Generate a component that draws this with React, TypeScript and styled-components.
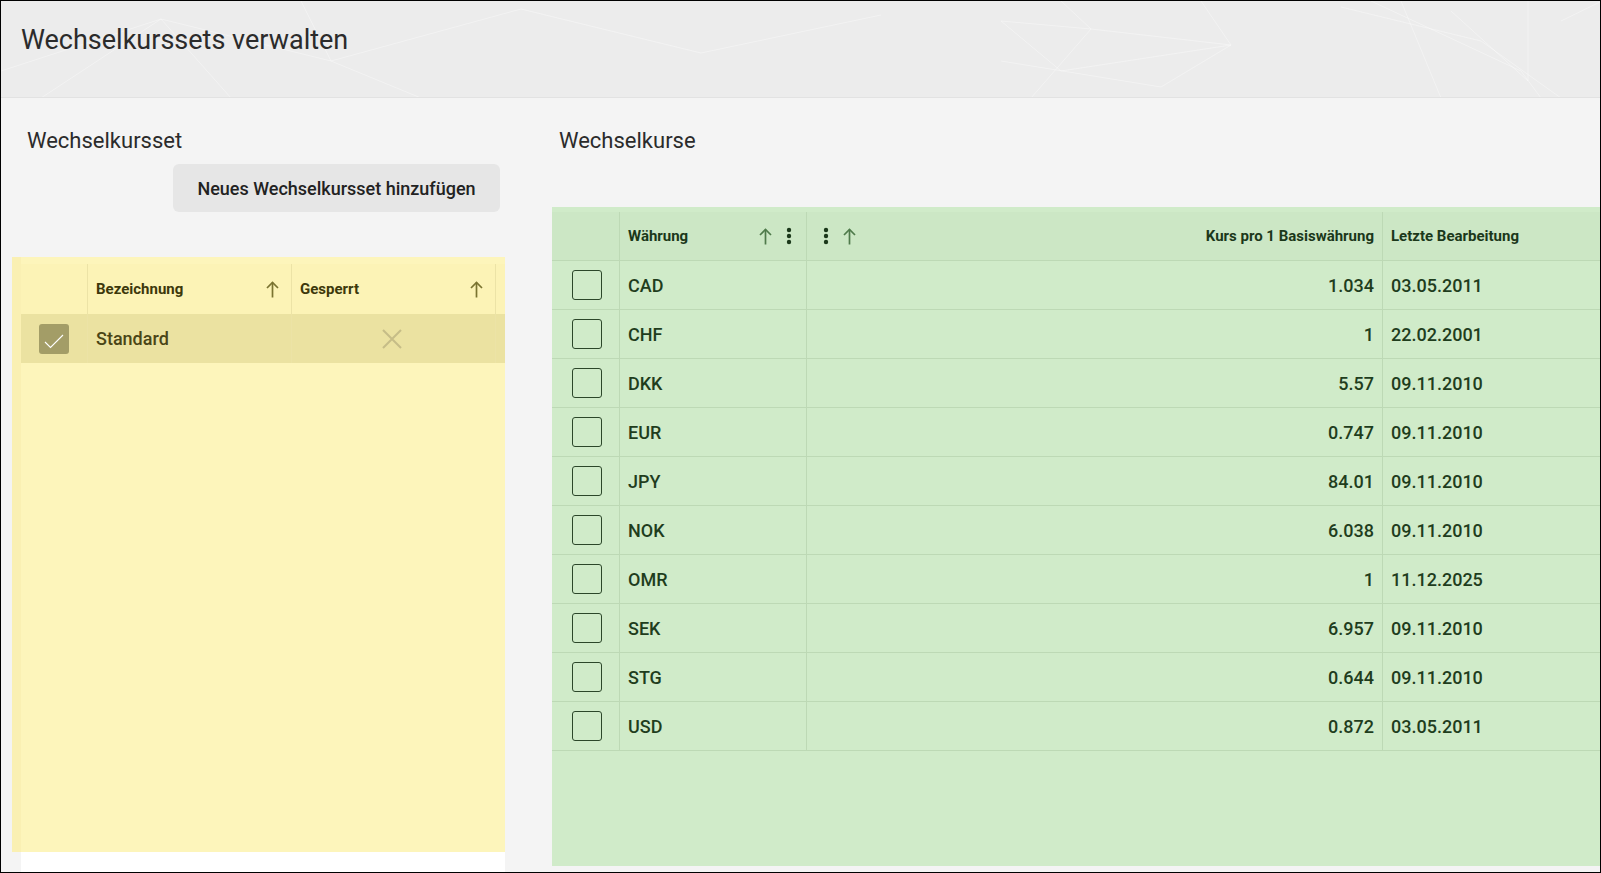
import styled, { createGlobalStyle } from "styled-components"

const GlobalStyle = createGlobalStyle`
  html, body {
    margin: 0;
    padding: 0;
    background: #f4f4f4;
  }
  body {
    font-family: Roboto, "Liberation Sans", Arial, sans-serif;
  }
  * {
    box-sizing: border-box;
  }
`

const pattern = encodeURIComponent(
  `<svg xmlns="http://www.w3.org/2000/svg" width="1601" height="97" viewBox="0 0 1601 97">
    <g fill="none" stroke="#ffffff" stroke-opacity="0.35" stroke-width="1">
      <path d="M0 70 L160 18 L330 60 L520 8 L700 52 L880 14"/>
      <path d="M40 97 L160 18 L230 97"/>
      <path d="M330 60 L420 97 M330 60 L300 0"/>
      <path d="M1000 20 L1090 28 L1230 44 L1200 0 M1030 97 L1090 28 L1060 0"/>
      <path d="M1000 60 L1160 86 L1230 44 L1060 70 L1000 20"/>
      <path d="M1340 6 L1480 40 L1560 97 M1370 0 L1520 70 L1540 97"/>
      <path d="M1400 0 L1440 97 M1450 10 L1527 80 L1527 0 M1560 20 L1601 0"/>
    </g>
  </svg>`
)

const Page = styled.div`
  width: 1601px;
  height: 873px;
  border: 1px solid #000;
  display: flex;
  flex-direction: column;
  background: #f4f4f4;
  overflow: hidden;
`

const Header = styled.header`
  flex: none;
  height: 97px;
  padding: 20px 0 0 20px;
  background-color: #ececec;
  background-image: url("data:image/svg+xml,${pattern}");
  border-bottom: 1px solid #e2e2e2;
`

const Title = styled.h1`
  margin: 0;
  font-size: 27px;
  line-height: 38px;
  font-weight: 400;
  color: #2b2b2b;
`

const Body = styled.main`
  flex: 1;
  display: flex;
  padding-left: 11px;
  min-height: 0;
`

const LeftCol = styled.section`
  width: 493px;
  flex: none;
  display: flex;
  flex-direction: column;
`

const RightCol = styled.section`
  flex: 1;
  margin-left: 47px;
  display: flex;
  flex-direction: column;
`

const SectionTitle = styled.h2<{ $indent: number }>`
  margin: 29px 0 0 ${(p) => p.$indent}px;
  font-size: 22px;
  line-height: 28px;
  font-weight: 400;
  color: #2b2b2b;
`

const ButtonRow = styled.div`
  display: flex;
  justify-content: flex-end;
  padding-right: 5px;
  margin-top: 9px;
`

const AddButton = styled.button`
  width: 327px;
  height: 48px;
  border: none;
  border-radius: 6px;
  background: #e6e6e6;
  font-family: inherit;
  font-size: 18px;
  font-weight: 500;
  color: #222;
  cursor: pointer;
`

const YellowPanel = styled.div`
  margin-top: 45px;
  height: 595px;
  flex: none;
  border-left: 9px solid #faf0b3;
  background: #fdf5bb;
  padding-top: 7px;
`

const WhiteFoot = styled.div`
  flex: 1;
  margin-left: 9px;
  background: #fff;
`

const SetRow = styled.div<{ $head?: boolean; $selected?: boolean }>`
  display: grid;
  grid-template-columns: 67px 204px 204px 1fr;
  height: ${(p) => (p.$head ? 50 : 49)}px;
  background: ${(p) => (p.$selected ? "#ebe2a1" : p.$head ? "#fcf3b6" : "transparent")};
`

const SetCell = styled.div<{ $center?: boolean; $last?: boolean }>`
  display: flex;
  align-items: center;
  justify-content: ${(p) => (p.$center ? "center" : "flex-start")};
  padding: 0 12px 0 8px;
  border-right: ${(p) => (p.$last ? "none" : "1px solid #ece3a6")};
  min-width: 0;
`

const HeadLabel = styled.span<{ $color: string }>`
  flex: 1;
  font-size: 15px;
  font-weight: 700;
  color: ${(p) => p.$color};
  white-space: nowrap;
`

const SetText = styled.span`
  font-size: 18px;
  font-weight: 500;
  color: #4a4516;
`

const CheckedBox = styled.span`
  width: 30px;
  height: 30px;
  margin-left: 4px;
  border-radius: 3px;
  background: #a39d67;
  display: flex;
  align-items: center;
  justify-content: center;
`

const GreenPanel = styled.div`
  flex: 1;
  margin-top: 52px;
  margin-bottom: 6px;
  background: #d0ebc9;
  padding-top: 5px;
`

const RateRow = styled.div<{ $head?: boolean }>`
  display: grid;
  grid-template-columns: 68px 187px 576px 1fr;
  height: 49px;
  border-bottom: 1px solid #bdd9b5;
  background: ${(p) => (p.$head ? "#cce7c5" : "transparent")};
`

const RateCell = styled.div<{ $align?: "left" | "right" | "center"; $last?: boolean; $pad?: string }>`
  display: flex;
  align-items: center;
  justify-content: ${(p) =>
    p.$align === "right" ? "flex-end" : p.$align === "center" ? "center" : "flex-start"};
  gap: 10px;
  padding: ${(p) => p.$pad ?? "0 8px"};
  border-right: ${(p) => (p.$last ? "none" : "1px solid #bdd9b5")};
  min-width: 0;
`

const RateText = styled.span`
  font-size: 18px;
  font-weight: 500;
  color: #1f3d1d;
`

const IconGroup = styled.span<{ $color: string }>`
  display: flex;
  align-items: center;
  gap: 14px;
  color: ${(p) => p.$color};
`

const EmptyBox = styled.span`
  width: 30px;
  height: 30px;
  margin-left: 3px;
  border: 1px solid #2c472a;
  border-radius: 3px;
`

const ArrowUp = () => (
  <svg width="13" height="17" viewBox="0 0 13 17" fill="none" stroke="currentColor" strokeWidth="1.7">
    <path d="M6.5 16.5V1.5" />
    <path d="M1 7L6.5 1.5L12 7" />
  </svg>
)

const Dots = ({ color }: { color: string }) => (
  <svg width="6" height="18" viewBox="0 0 6 18" fill={color}>
    <circle cx="3" cy="3" r="2.2" />
    <circle cx="3" cy="9" r="2.2" />
    <circle cx="3" cy="15" r="2.2" />
  </svg>
)

const XMark = () => (
  <svg width="22" height="22" viewBox="0 0 22 22" fill="none" stroke="#c6bd87" strokeWidth="2">
    <path d="M2 2L20 20M20 2L2 20" />
  </svg>
)

const Check = () => (
  <svg width="30" height="30" viewBox="0 0 30 30" fill="none" stroke="#fff" strokeWidth="1.1">
    <path d="M6 18L11.5 23.5L24 11" />
  </svg>
)

const rates = [
  { code: "CAD", rate: "1.034", date: "03.05.2011" },
  { code: "CHF", rate: "1", date: "22.02.2001" },
  { code: "DKK", rate: "5.57", date: "09.11.2010" },
  { code: "EUR", rate: "0.747", date: "09.11.2010" },
  { code: "JPY", rate: "84.01", date: "09.11.2010" },
  { code: "NOK", rate: "6.038", date: "09.11.2010" },
  { code: "OMR", rate: "1", date: "11.12.2025" },
  { code: "SEK", rate: "6.957", date: "09.11.2010" },
  { code: "STG", rate: "0.644", date: "09.11.2010" },
  { code: "USD", rate: "0.872", date: "03.05.2011" },
]

export default function App() {
  return (
    <>
      <GlobalStyle />
      <Page>
        <Header>
          <Title>Wechselkurssets verwalten</Title>
        </Header>
        <Body>
          <LeftCol>
            <SectionTitle $indent={15}>Wechselkursset</SectionTitle>
            <ButtonRow>
              <AddButton>Neues Wechselkursset hinzufügen</AddButton>
            </ButtonRow>
            <YellowPanel>
              <SetRow $head>
                <SetCell />
                <SetCell>
                  <HeadLabel $color="#3d380b">Bezeichnung</HeadLabel>
                  <IconGroup $color="#7a7330">
                    <ArrowUp />
                  </IconGroup>
                </SetCell>
                <SetCell>
                  <HeadLabel $color="#3d380b">Gesperrt</HeadLabel>
                  <IconGroup $color="#7a7330">
                    <ArrowUp />
                  </IconGroup>
                </SetCell>
                <SetCell $last />
              </SetRow>
              <SetRow $selected>
                <SetCell $center>
                  <CheckedBox>
                    <Check />
                  </CheckedBox>
                </SetCell>
                <SetCell>
                  <SetText>Standard</SetText>
                </SetCell>
                <SetCell $center>
                  <XMark />
                </SetCell>
                <SetCell $last />
              </SetRow>
            </YellowPanel>
            <WhiteFoot />
          </LeftCol>
          <RightCol>
            <SectionTitle $indent={7}>Wechselkurse</SectionTitle>
            <GreenPanel>
              <RateRow $head>
                <RateCell />
                <RateCell $pad="0 14px 0 8px">
                  <HeadLabel $color="#1b381a">Währung</HeadLabel>
                  <IconGroup $color="#4f7a4b">
                    <ArrowUp />
                    <Dots color="#1b381a" />
                  </IconGroup>
                </RateCell>
                <RateCell $pad="0 8px 0 16px">
                  <IconGroup $color="#4f7a4b">
                    <Dots color="#1b381a" />
                    <ArrowUp />
                  </IconGroup>
                  <HeadLabel $color="#1b381a" style={{ textAlign: "right" }}>
                    Kurs pro 1 Basiswährung
                  </HeadLabel>
                </RateCell>
                <RateCell $last>
                  <HeadLabel $color="#1b381a">Letzte Bearbeitung</HeadLabel>
                </RateCell>
              </RateRow>
              {rates.map((r) => (
                <RateRow key={r.code}>
                  <RateCell $align="center">
                    <EmptyBox />
                  </RateCell>
                  <RateCell>
                    <RateText>{r.code}</RateText>
                  </RateCell>
                  <RateCell $align="right">
                    <RateText>{r.rate}</RateText>
                  </RateCell>
                  <RateCell $last>
                    <RateText>{r.date}</RateText>
                  </RateCell>
                </RateRow>
              ))}
            </GreenPanel>
          </RightCol>
        </Body>
      </Page>
    </>
  )
}
